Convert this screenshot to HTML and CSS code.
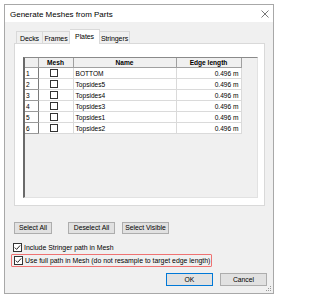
FILE: index.html
```html
<!DOCTYPE html>
<html>
<head>
<meta charset="utf-8">
<link rel="stylesheet" href="styles.css">
</head>
<body>
<div class="window">
  <div class="titlebar">
    <span class="title">Generate Meshes from Parts</span>
    <svg class="close" width="8" height="8" viewBox="0 0 8 8"><path d="M0.5 0.5 L7.5 7.5 M7.5 0.5 L0.5 7.5" stroke="#555" stroke-width="0.8" fill="none"/></svg>
  </div>
  <div class="body">
    <div class="tabs">
      <div class="tab t-decks">Decks</div>
      <div class="tab t-frames">Frames</div>
      <div class="tab t-plates active">Plates</div>
      <div class="tab t-stringers">Stringers</div>
    </div>
    <div class="panel">
      <div class="grid">
        <table class="dgv">
          <colgroup><col class="c0"><col class="c1"><col class="c2"><col class="c3"></colgroup>
          <thead>
            <tr><th></th><th>Mesh</th><th>Name</th><th>Edge length</th></tr>
          </thead>
          <tbody>
            <tr><td class="rh">1</td><td class="mc"><span class="cb"></span></td><td class="nm">BOTTOM</td><td class="val">0.496 m</td></tr>
            <tr><td class="rh">2</td><td class="mc"><span class="cb"></span></td><td class="nm">Topsides5</td><td class="val">0.496 m</td></tr>
            <tr><td class="rh">3</td><td class="mc"><span class="cb"></span></td><td class="nm">Topsides4</td><td class="val">0.496 m</td></tr>
            <tr><td class="rh">4</td><td class="mc"><span class="cb"></span></td><td class="nm">Topsides3</td><td class="val">0.496 m</td></tr>
            <tr><td class="rh">5</td><td class="mc"><span class="cb"></span></td><td class="nm">Topsides1</td><td class="val">0.496 m</td></tr>
            <tr><td class="rh">6</td><td class="mc"><span class="cb"></span></td><td class="nm">Topsides2</td><td class="val">0.496 m</td></tr>
          </tbody>
        </table>
      </div>
    </div>
    <div class="btnrow">
      <button class="btn b-all">Select All</button>
      <button class="btn b-desel">Deselect All</button>
      <button class="btn b-vis">Select Visible</button>
    </div>
    <div class="chk chk1">
      <svg class="box" width="9" height="9" viewBox="0 0 9 9"><rect x="0.5" y="0.5" width="8" height="8" fill="#fff" stroke="#333" stroke-width="1"/><path d="M1.8 4.6 L3.6 6.4 L7.2 2.4" stroke="#222" stroke-width="1" fill="none"/></svg>
      <span>Include Stringer path in Mesh</span>
    </div>
    <div class="highlight">
      <div class="chk chk2">
        <svg class="box" width="9" height="9" viewBox="0 0 9 9"><rect x="0.5" y="0.5" width="8" height="8" fill="#fff" stroke="#333" stroke-width="1"/><path d="M1.8 4.6 L3.6 6.4 L7.2 2.4" stroke="#222" stroke-width="1" fill="none"/></svg>
        <span>Use full path in Mesh (do not resample to target edge length)</span>
      </div>
    </div>
    <div class="footer">
      <button class="btn ok">OK</button>
      <button class="btn cancel">Cancel</button>
    </div>
  </div>
  <svg class="grip" width="6" height="6" viewBox="0 0 6 6">
    <rect x="4" y="0" width="1" height="1" fill="#999"/>
    <rect x="2" y="2" width="1" height="1" fill="#999"/>
    <rect x="4" y="2" width="1" height="1" fill="#999"/>
    <rect x="0" y="4" width="1" height="1" fill="#999"/>
    <rect x="2" y="4" width="1" height="1" fill="#999"/>
    <rect x="4" y="4" width="1" height="1" fill="#999"/>
  </svg>
</div>
</body>
</html>
```
FILE: styles.css
```css
html, body {
  margin: 0;
  padding: 0;
  background: #ffffff;
}
body {
  padding: 4px;
  font-family: "Liberation Sans", Arial, sans-serif;
  color: #000;
}
.window {
  position: relative;
  width: 268px;
  height: 288px;
  border: 1px solid #a8a8a8;
  background: #f0f0f0;
  display: flex;
  flex-direction: column;
  box-sizing: content-box;
}
.titlebar {
  height: 17px;
  background: #ffffff;
  display: flex;
  align-items: center;
  padding-left: 5px;
  padding-right: 4px;
}
.title {
  font-size: 8px;
  flex: 1;
  padding-top: 1px;
}
.close {
  margin-top: 1px;
}
.body {
  flex: 1;
  padding: 7px 8px 0 9px;
  display: flex;
  flex-direction: column;
}
.tabs {
  display: flex;
  align-items: flex-end;
  height: 14px;
  margin-left: 2px;
  position: relative;
  z-index: 2;
}
.tab {
  box-sizing: border-box;
  height: 12px;
  border: 1px solid #d9d9d9;
  border-bottom: none;
  border-left: none;
  background: #f0f0f0;
  font-size: 7px;
  display: flex;
  align-items: center;
  justify-content: center;
  padding-top: 1px;
  letter-spacing: -0.1px;
}
.t-decks { width: 27px; border-left: 1px solid #d9d9d9; }
.t-frames { width: 27px; }
.t-plates { width: 30px; }
.t-stringers { width: 30px; }
.tab.active {
  height: 15px;
  margin-bottom: -1px;
  background: #ffffff;
  padding-bottom: 2px;
}
.panel {
  box-sizing: border-box;
  height: 163px;
  border: 1px solid #d9d9d9;
  background: #ffffff;
  padding: 13px 6px 7px 8px;
  position: relative;
  z-index: 1;
}
.grid {
  box-sizing: border-box;
  height: 141px;
  border-top: 1px solid #8a8a8a;
  border-left: 2px solid #6a6a6a;
  border-right: 1px solid #e2e2e2;
  border-bottom: 1px solid #e2e2e2;
  background: #f0f0f0;
}
.dgv {
  border-collapse: collapse;
  table-layout: fixed;
  width: 216px;
  font-size: 6.6px;
}
.c0 { width: 13px; }
.c1 { width: 35px; }
.c2 { width: 103px; }
.c3 { width: 65px; }
.dgv th {
  height: 9px;
  padding: 0;
  font-weight: bold;
  background: #f0f0f0;
  border-right: 1px solid #a0a0a0;
  border-bottom: 1px solid #a0a0a0;
  text-align: center;
  line-height: 8px;
}
.dgv td {
  height: 10px;
  padding: 0;
  line-height: 9px;
  background: #ffffff;
  border-right: 1px solid #dadada;
  border-bottom: 1px solid #dadada;
  white-space: nowrap;
  overflow: hidden;
}
.dgv td.rh {
  border-right: 1px solid #7a7a7a;
  border-bottom: 1px solid #9a9a9a;
  padding-left: 1px;
  background: #ffffff;
}
.dgv td.mc {
  text-align: center;
}
.cb {
  display: inline-block;
  width: 6px;
  height: 6px;
  border: 1px solid #333;
  background: #fff;
  vertical-align: middle;
  margin-left: -4px;
  margin-top: -1px;
}
.dgv td.nm {
  padding-left: 2px;
}
.dgv td.val {
  text-align: right;
  padding-right: 2px;
}
.btnrow {
  display: flex;
  margin-top: 16px;
}
.btn {
  box-sizing: border-box;
  height: 12px;
  padding: 0;
  margin: 0;
  background: #e1e1e1;
  border: 1px solid #adadad;
  font-family: "Liberation Sans", Arial, sans-serif;
  font-size: 6.8px;
  color: #000;
  line-height: 10px;
}
.b-all { width: 38px; }
.b-desel { width: 47px; margin-left: 16px; }
.b-vis { width: 47px; margin-left: 7px; }
.chk {
  display: flex;
  align-items: center;
  font-size: 6.9px;
}
.chk .box {
  flex: none;
}
.chk1 {
  margin-top: 8px;
  height: 10px;
  margin-left: -1px;
}
.chk1 span { margin-left: 2px; }
.highlight {
  box-sizing: border-box;
  width: 201px;
  height: 13px;
  margin-top: 2px;
  margin-left: -3px;
  border: 1.5px solid #ef7272;
  border-radius: 1px;
  display: flex;
  align-items: center;
}
.chk2 {
  margin-left: 2px;
}
.chk2 span { margin-left: 2px; }
.footer {
  display: flex;
  justify-content: flex-end;
  margin-top: 6px;
  margin-right: -2px;
}
.ok, .cancel {
  width: 47px;
  height: 13px;
}
.ok {
  border: 1.5px solid #0078d7;
}
.cancel {
  margin-left: 7px;
}
.grip {
  position: absolute;
  right: 1px;
  bottom: 1px;
}
```
